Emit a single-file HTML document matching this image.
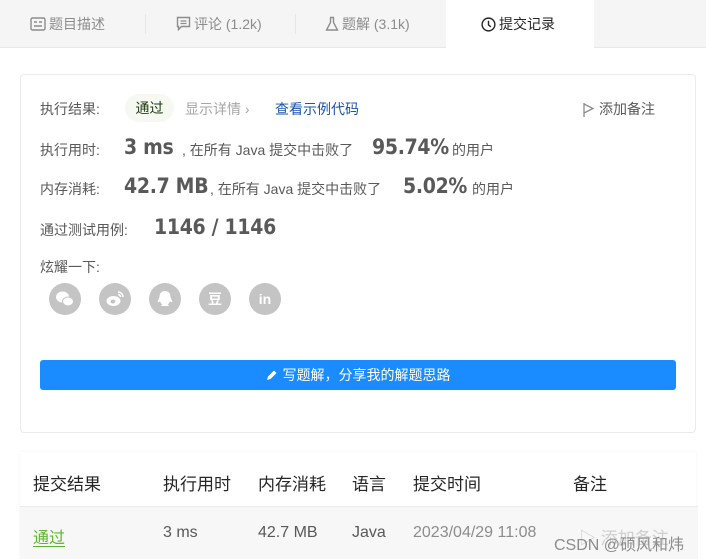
<!DOCTYPE html>
<html><head><meta charset="utf-8"><style>
*{margin:0;padding:0;box-sizing:border-box}
body{width:706px;height:559px;overflow:hidden;background:#fff;font-family:"Liberation Sans","Noto Sans CJK SC",sans-serif;color:#262626;position:relative}
.a{position:absolute;white-space:nowrap}
.tabs{position:absolute;left:0;top:0;width:706px;height:48px;background:#f5f5f5;border-bottom:1px solid #e8e8e8}
.tab{position:absolute;top:0;height:48px;line-height:48px;font-size:14px;color:#8c8c8c;display:flex;align-items:center;gap:3px}
.sep{position:absolute;top:14px;width:1px;height:20px;background:#e6e6e6}
.card{position:absolute;left:20px;top:74px;width:676px;height:359px;border:1px solid #ebebeb;border-radius:4px}
.lbl{font-size:14px;color:#595959}
.big{font-size:21px;color:#595959;font-family:"DejaVu Sans Condensed","Liberation Sans Narrow",sans-serif;font-weight:bold;letter-spacing:-0.3px}
.sm{font-size:14px;color:#595959}
.ic{position:absolute;top:283px;width:32px;height:32px;border-radius:50%;background:#c4c4c4;color:#fff;font-weight:bold;text-align:center;line-height:32px;font-size:14px}
.ic svg{position:absolute;left:0;top:0}
.th{font-size:17px;color:#262626;top:470px}
.td{font-size:16px;color:#595959;top:524px}
</style></head><body>
<div class="tabs">
 <div class="tab" style="left:30px"><svg width="16" height="14" viewBox="0 0 16 14"><rect x="1" y="1" width="14" height="12" rx="1.5" fill="none" stroke="#8c8c8c" stroke-width="1.4"/><path d="M4 5h3M9 5h3M4 9h8" stroke="#8c8c8c" stroke-width="1.4"/></svg>题目描述</div>
 <div class="sep" style="left:145px"></div>
 <div class="tab" style="left:176px"><svg width="15" height="16" viewBox="0 0 15 16"><path d="M1.5 1.5h12v9h-8l-3 3v-3h-1z" fill="none" stroke="#8c8c8c" stroke-width="1.4"/><path d="M4.5 5h6M4.5 7.5h6" stroke="#8c8c8c" stroke-width="1.3"/></svg>评论 (1.2k)</div>
 <div class="sep" style="left:295px"></div>
 <div class="tab" style="left:325px"><svg width="14" height="16" viewBox="0 0 14 16"><path d="M5 1.5h4M5.5 1.5v5l-4 7.5h11l-4-7.5v-5" fill="none" stroke="#8c8c8c" stroke-width="1.4"/></svg>题解 (3.1k)</div>
 <div style="position:absolute;left:446px;top:0;width:148px;height:49px;background:#fff"></div>
 <div class="tab" style="left:481px;color:#262626"><svg width="15" height="15" viewBox="0 0 16 16"><circle cx="8" cy="8" r="6.8" fill="none" stroke="#262626" stroke-width="1.5"/><path d="M8 4v4.5l2.5 2" fill="none" stroke="#262626" stroke-width="1.5"/></svg>提交记录</div>
</div>
<div class="card"></div>
<div class="a lbl" style="left:40px;top:99px">执行结果:</div>
<div class="a" style="left:125px;top:94px;width:49px;height:28px;border-radius:14px;background:#f6f9f1;font-size:14px;line-height:28px;text-align:center;color:#1f3a10">通过</div>
<div class="a" style="left:185px;top:99px;font-size:14px;color:#a6a6a6">显示详情 ›</div>
<div class="a" style="left:275px;top:99px;font-size:14px;color:#1a55a8">查看示例代码</div>
<div class="a" style="left:582px;top:99px;font-size:14px;color:#595959;display:flex;align-items:center;gap:4px"><svg width="13" height="15" viewBox="0 0 13 15"><path d="M2 1v14M2 2l9 4.5-9 4.5" fill="none" stroke="#8c8c8c" stroke-width="1.3"/></svg>添加备注</div>

<div class="a lbl" style="left:40px;top:140px">执行用时:</div>
<div class="a big" style="left:124px;top:135px">3 ms</div>
<div class="a sm" style="left:182px;top:140px">, 在所有 Java 提交中击败了</div>
<div class="a big" style="left:372px;top:135px">95.74%</div>
<div class="a sm" style="left:452px;top:140px">的用户</div>

<div class="a lbl" style="left:40px;top:179px">内存消耗:</div>
<div class="a big" style="left:124px;top:174px">42.7 MB</div>
<div class="a sm" style="left:210px;top:179px">, 在所有 Java 提交中击败了</div>
<div class="a big" style="left:403px;top:174px">5.02%</div>
<div class="a sm" style="left:472px;top:179px">的用户</div>

<div class="a lbl" style="left:40px;top:220px">通过测试用例:</div>
<div class="a big" style="left:154px;top:215px">1146 / 1146</div>

<div class="a lbl" style="left:40px;top:257px">炫耀一下:</div>
<div class="ic" style="left:49px"><svg width="32" height="32"><ellipse cx="13.5" cy="14" rx="6.5" ry="5.5" fill="#fff"/><ellipse cx="19" cy="18.5" rx="5.5" ry="4.5" fill="#fff" stroke="#c4c4c4" stroke-width="1"/></svg></div>
<div class="ic" style="left:99px"><svg width="32" height="32"><ellipse cx="14.5" cy="18" rx="7" ry="5" fill="#fff"/><ellipse cx="14" cy="18.5" rx="2.5" ry="2" fill="#c4c4c4"/><path d="M19 9a5 5 0 0 1 5 5M19 11.5a2.5 2.5 0 0 1 2.5 2.5" fill="none" stroke="#fff" stroke-width="1.5"/></svg></div>
<div class="ic" style="left:149px"><svg width="32" height="32"><path d="M16 8c-4 0-5.5 3-5.5 6l-2 5c1 .5 2 0 2.5-1 .5 2 1.5 3 2.5 3.5-1.5.5-2 1.5-.5 1.5h6c1.5 0 1-1-.5-1.5 1-.5 2-1.5 2.5-3.5.5 1 1.5 1.5 2.5 1l-2-5c0-3-1.5-6-5.5-6z" fill="#fff"/></svg></div>
<div class="ic" style="left:199px">豆</div>
<div class="ic" style="left:249px">in</div>

<div class="a" style="left:40px;top:360px;width:636px;height:30px;background:#1a8cff;border-radius:3px;color:#fff;font-size:14px;line-height:30px;text-align:center">
<svg width="12" height="12" viewBox="0 0 12 12" style="vertical-align:-1px;margin-right:5px"><path d="M1 11l1-3.5 6-6 2.5 2.5-6 6z" fill="#fff"/></svg>写题解，分享我的解题思路</div>

<div class="a" style="left:20px;top:452px;width:676px;height:107px;box-shadow:0 0 2px rgba(0,0,0,.06)"></div>
<div class="a" style="left:20px;top:506px;width:678px;height:53px;background:#f7f7f7;border-top:1px solid #ececec"></div>
<div class="a th" style="left:33px">提交结果</div>
<div class="a th" style="left:163px">执行用时</div>
<div class="a th" style="left:258px">内存消耗</div>
<div class="a th" style="left:352px">语言</div>
<div class="a th" style="left:413px">提交时间</div>
<div class="a th" style="left:573px">备注</div>
<div class="a td" style="left:33px;color:#5cb82a;text-decoration:underline;text-underline-offset:3px">通过</div>
<div class="a td" style="left:163px">3 ms</div>
<div class="a td" style="left:258px">42.7 MB</div>
<div class="a td" style="left:352px">Java</div>
<div class="a td" style="left:413px;color:#8c8c8c">2023/04/29 11:08</div>
<div class="a td" style="left:579px;color:#d0d0d0;font-size:17px">▷ 添加备注</div>
<div class="a" style="left:554px;top:531px;font-size:16px;color:#8c8c8c">CSDN @硕风和炜</div>
</body></html>
